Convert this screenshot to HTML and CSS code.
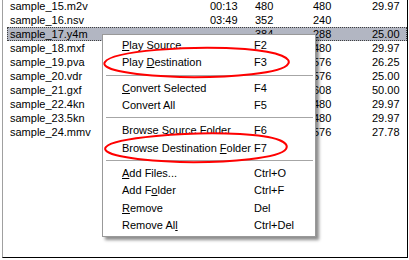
FILE: index.html
```html
<!DOCTYPE html>
<html lang="en">
<head>
    <meta charset="UTF-8">
    <title>Batch list context menu</title>
    <link rel="stylesheet" href="styles.css">
</head>
<body>

<div class="frame">
    <div class="list">
        <div class="row"><span>sample_15.m2v</span><span>00:13</span><span>480</span><span>480</span><span>29.97</span></div>
        <div class="row"><span>sample_16.nsv</span><span>03:49</span><span>352</span><span>240</span><span></span></div>
        <div class="row selected"><span>sample_17.y4m</span><span></span><span>384</span><span>288</span><span>25.00</span></div>
        <!-- duration and width columns of these rows lie under the menu -->
        <div class="row"><span>sample_18.mxf</span><span></span><span></span><span>480</span><span>29.97</span></div>
        <div class="row"><span>sample_19.pva</span><span></span><span></span><span>576</span><span>26.25</span></div>
        <div class="row"><span>sample_20.vdr</span><span></span><span></span><span>576</span><span>25.00</span></div>
        <div class="row"><span>sample_21.gxf</span><span></span><span></span><span>608</span><span>50.00</span></div>
        <div class="row"><span>sample_22.4kn</span><span></span><span></span><span>480</span><span>29.97</span></div>
        <div class="row"><span>sample_23.5kn</span><span></span><span></span><span>480</span><span>29.97</span></div>
        <div class="row"><span>sample_24.mmv</span><span></span><span></span><span>576</span><span>27.78</span></div>
    </div>

    <!-- context menu over the list -->
    <div class="menu">
        <div class="item"><span><u>P</u>lay Source</span><span>F2</span></div>
        <div class="item"><span>Play <u>D</u>estination</span><span>F3</span></div>
        <div class="sep"></div>
        <div class="item"><span><u>C</u>onvert Selected</span><span>F4</span></div>
        <div class="item"><span>Convert All</span><span>F5</span></div>
        <div class="sep"></div>
        <div class="item"><span>Browse <u>S</u>ource Folder</span><span>F6</span></div>
        <div class="item"><span>Browse Destination <u>F</u>older</span><span>F7</span></div>
        <div class="sep"></div>
        <div class="item"><span><u>A</u>dd Files...</span><span>Ctrl+O</span></div>
        <div class="item"><span>Add F<u>o</u>lder</span><span>Ctrl+F</span></div>
        <div class="item"><span><u>R</u>emove</span><span>Del</span></div>
        <div class="item"><span>Remove Al<u>l</u></span><span>Ctrl+Del</span></div>
    </div>

    <!-- red hand-drawn marks -->
    <svg class="marks" width="409" height="260" viewBox="0 0 409 260">
        <path d="M105,62 C112,51 190,45 245,49 C282,52 292,59 288,64 C283,73 232,78 180,77 C122,75 100,68 105,62 Z"/>
        <path d="M106,147 C113,138 188,131 240,134 C279,136 290,143 286,149 C280,158 230,163 180,162 C124,160 100,153 106,147 Z"/>
    </svg>
</div>

</body>
</html>
```

FILE: styles.css
```css
body {
    margin: 0;
    padding: 0;
    background-color: #fff;
    font-family: 'Liberation Sans', Arial, sans-serif;
    font-size: 11px;
    color: #000;
}

.frame {
    position: relative;
    width: 409px;
    height: 260px;
    padding: 0 1px 1px 2px;
    box-sizing: border-box;
    background-color: #fff;
    overflow: hidden;
}

.list {
    height: 100%;
    box-sizing: border-box;
    border-left: 1px solid #a0a0a0;
    border-right: 1px solid #000;
    border-bottom: 1px solid #000;
}

.row {
    display: grid;
    grid-template-columns: 200px 45px 58px 59px 1fr;
    height: 14px;
    line-height: 14px;
    margin-left: 4px;
    padding-left: 3px;
    white-space: nowrap;
}

.row:first-child {
    margin-top: -1px;
}

.row.selected {
    background-color: #b2b6c2;
    outline: 1px dotted #404040;
    outline-offset: -1px;
}

.menu {
    position: absolute;
    left: 102px;
    top: 34px;
    width: 214px;
    box-sizing: border-box;
    padding: 2px 0;
    background-color: #fff;
    border: 1px solid #999;
    box-shadow: 3px 3px 3px rgba(0, 0, 0, 0.45);
}

.menu .item {
    display: grid;
    grid-template-columns: 132px 1fr;
    height: 17.33px;
    line-height: 17px;
    padding-left: 19px;
    white-space: nowrap;
}

.menu u {
    text-underline-offset: 1px;
}

.menu .sep {
    height: 0;
    margin: 3px 2px 4px 3px;
    border-top: 1px solid #a6a6a6;
}

.marks {
    position: absolute;
    left: 0;
    top: 0;
    pointer-events: none;
}

.marks path {
    fill: none;
    stroke: #f00;
    stroke-width: 2;
}
```
